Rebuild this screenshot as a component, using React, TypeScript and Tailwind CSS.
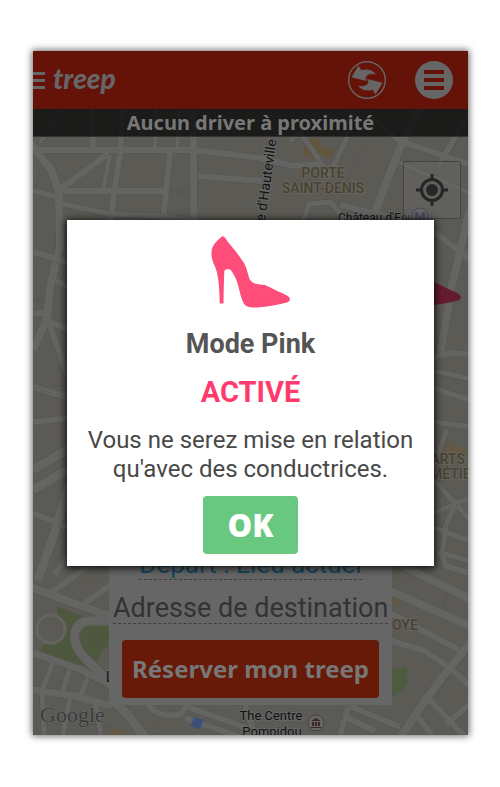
import React from "react";

const ROADS: { w: number; d: string }[] = [
  { w: 6, d: "M33 150H193L260 158L293 166L322 164" },
  { w: 8, d: "M30 143L52 171L59 192L60 247L50 287L47 318L33 350" },
  { w: 3, d: "M40 143L62 109" },
  { w: 6, d: "M92 109L93 150M123 109L120 153L110 222" },
  { w: 4, d: "M156 109L155 148M179 109L177 148M110 155L103 190" },
  { w: 7, d: "M193 109L194 225" },
  { w: 6, d: "M170 152L163 222M198 176L262 181M62 191H163M62 188L108 154" },
  { w: 5, d: "M33 191L58 197M63 204L110 214L163 216L200 222" },
  { w: 5, d: "M352 109L346 140L330 173M303 222L309 204L331 202L347 222M290 141L300 132L322 164L330 176" },
  { w: 8, d: "M420 105L399 150L377 207L370 225" },
  { w: 6, d: "M366 112L400 141L468 164M470 112L438 166M340 205L386 216" },
  { w: 4, d: "M398 162L470 193" },
  { w: 8, d: "M470 208L461 247L452 285L440 355" },
  { w: 6, d: "M430 229L470 259M430 358L450 353L470 354" },
  { w: 5, d: "M430 370L470 379M430 387L470 400M430 421L470 427M447 430L434 465" },
  { w: 5, d: "M430 515L470 498M430 526L470 541M457 500L446 525L442 553L470 561M434 480L470 520" },
  { w: 6, d: "M33 252L70 263M33 314L48 312M50 322L70 330M56 281L70 287M48 320L70 382" },
  { w: 6, d: "M33 387L70 398M33 422L70 418M33 513L70 528" },
  { w: 9, d: "M33 470L70 448M33 490L70 468M69 486L54 534L38 580" },
  { w: 8, d: "M28 586L57 597L109 616" },
  { w: 6, d: "M48 595L91 564M85 603L112 584M55 575L67 557" },
  { w: 9, d: "M112 621H88C77 622 72 633 76 644C80 657 97 669 112 683" },
  { w: 7, d: "M33 653L84 671L112 686M33 690L75 696L112 706" },
  { w: 5, d: "M53 662L42 691L44 735M70 668L61 697M88 677L79 700M70 698L63 735M95 703L101 735" },
  { w: 9, d: "M109 700C124 707 129 717 145 737" },
  { w: 6, d: "M145 700C152 714 166 718 181 714L188 704M185 706L247 728M185 718L240 737M245 705L255 735" },
  { w: 8, d: "M397 563L470 599M388 590L470 626" },
  { w: 6, d: "M388 612L459 650M388 640L425 651L450 668L472 688M440 550L446 566L470 573" },
  { w: 8, d: "M472 641L448 670L424 702L400 738" },
  { w: 6, d: "M427 697L466 738M350 706L400 727M346 717L375 731M340 735L348 706M414 712L432 735M446 724L470 704" },
];

const HEEL =
  "M11.800 0C14 1 15 3 17 6L26 17L33 27C37 34 37 42 40 45C43 49 50 48 54 49C62 53 69 56 75 59C80 61 80 65 76 66.500C66 69 56 71 46 71.500C39 72 35 71 32.500 67C29 60 28 50 25 43C22 37 20 34 19 33.500C17 33 14 33 13.300 35C13 46 12.600 56 12.500 67.500H8.700C8.500 55 8 48 7 42C6 34 4 31 2 26C-2 14 2 7 11.800 0Z";

const SWAP_ARROW =
  "M4 17.500L11.500 5L14.500 10C20 8 26.500 9.500 29.500 15C25.500 13.500 21.500 14 19.500 16.500C18.500 18 19 19.500 20.500 21.500L4 17.500Z";

function CityMap() {
  return (
    <svg
      className="absolute inset-0 h-full w-full"
      viewBox="33 51 435 684"
      preserveAspectRatio="xMidYMid slice"
      aria-hidden="true"
    >
      <rect x="33" y="51" width="435" height="684" fill="#5c5a54" />
      <path d="M308 139L318 137L320 146L334 150L330 158L318 154L314 160L301 154Z" fill="#62563f" />
      <path d="M446 442L466 449L464 457L444 452Z" fill="#625843" />
      <path d="M392 595L402 600L397 607L392 605Z" fill="#625843" />
      <path d="M113 728L126 731L122 737H108Z" fill="#625843" />
      <path d="M57 606L86 618L76 630L76 650L88 667L40 652L46 640L57 640Z" fill="#4d583e" />
      <path d="M110 624L86 624L79 637L84 652L97 662L102 650L110 645Z" fill="#4d583e" />
      <path d="M392 667L402 670L404 666L408 669L406 679L408 683L402 690L392 697Z" fill="#4d5b3f" />
      <g fill="none" stroke="#54534e" strokeWidth="1">
        <path d="M169 192H190M40 168L35 190M36 301L43 303M33 300H45M50 386H64M80 163V168M450 272L470 280M450 592L442 608M85 722L110 728M250 722L262 735M448 677L434 700" />
      </g>
      <g fill="none" stroke="#555450" strokeLinejoin="round">
        {ROADS.map((r) => (
          <path key={r.d} d={r.d} strokeWidth={r.w + 1} />
        ))}
      </g>
      <g fill="none" stroke="#646463" strokeLinejoin="round">
        {ROADS.map((r) => (
          <path key={r.d} d={r.d} strokeWidth={r.w} />
        ))}
      </g>
      <circle cx="51" cy="629" r="14" fill="#5c5a54" stroke="#646463" strokeWidth="3" />
      <g fill="none" stroke="#4d4c49" strokeDasharray="1 3">
        <path d="M365 137L336 210M460 137L440 172M33 256L70 266M33 388L70 399M45 657L109 690M434 376L468 382M434 514L468 500M434 524L468 534M394 578L398 556M337 735L347 706M157 640V735" />
      </g>
      <rect x="192" y="718" width="10" height="10" rx="1" fill="#3b5078" transform="rotate(18 197 723)" />

      <g fontFamily="Roboto, sans-serif" fontSize="14">
        <g fill="#484133" stroke="#66635c" strokeWidth="2" paintOrder="stroke" fontWeight="500" textAnchor="middle">
          <text x="323" y="178">PORTE</text>
          <text x="323" y="193">SAINT-DENIS</text>
          <text x="392" y="630" textAnchor="start">OYE</text>
          <text x="465" y="464" textAnchor="end">ARTS</text>
          <text x="430" y="479" textAnchor="start">MÉTIERS</text>
        </g>
        <g fill="#111" stroke="#666" strokeWidth="2" paintOrder="stroke">
          <text x="338" y="222" fontSize="12">Château d'Eau</text>
          <text transform="translate(265 222) rotate(-82)">e d'Hauteville</text>
          <text x="271" y="720" fontSize="13" textAnchor="middle">The Centre</text>
          <text x="272" y="736" fontSize="13" textAnchor="middle">Pompidou</text>
          <text x="106" y="682">L</text>
        </g>
      </g>
      <circle cx="420" cy="216" r="8" fill="#66666c" stroke="#2b2850" />
      <text x="420" y="221" fontFamily="Roboto, sans-serif" fontSize="13" fontWeight="700" fill="#2b2850" textAnchor="middle">M</text>
      <circle cx="316" cy="723" r="8" fill="#666" stroke="#454340" />
      <path d="M311 721L316 718L321 721ZM312 722H314V726H312ZM315 722H317V726H315ZM318 722H320V726H318ZM311 727H321V728H311Z" fill="#3a2520" />
      <text x="40" y="722" fontFamily="Liberation Serif, serif" fontSize="22" fill="#3c3c3c" stroke="#696969" strokeWidth="1" paintOrder="stroke">Google</text>
      <g transform="translate(382 234)" fill="#661c2f">
        <path d={HEEL} />
      </g>
    </svg>
  );
}

function Header() {
  return (
    <header className="relative flex h-[58px] items-center bg-[#651208] pr-[15px]">
      <button type="button" aria-label="Navigation" className="flex w-3 flex-col gap-1">
        <span className="h-[3px] w-full bg-[#666]" />
        <span className="h-[3px] w-full bg-[#666]" />
        <span className="h-[3px] w-full bg-[#666]" />
      </button>
      <span className="ml-2 pb-1 font-['Lato'] text-[28px] leading-8 font-black text-[#666] italic">treep</span>
      <div className="ml-auto flex items-center gap-7">
        <button type="button" aria-label="Échanger">
          <svg className="block size-10" viewBox="0 0 40 40">
            <circle cx="20" cy="20" r="18.300" fill="none" stroke="#666" strokeWidth="1.400" />
            <g fill="#666" stroke="#651208" strokeWidth="0.600">
              <path d={SWAP_ARROW} />
              <path d={SWAP_ARROW} transform="rotate(180 20 20)" />
            </g>
          </svg>
        </button>
        <button type="button" aria-label="Menu" className="flex size-[38px] flex-col items-center justify-center gap-1 rounded-full bg-[#666]">
          <span className="h-1 w-5 bg-[#651208]" />
          <span className="h-1 w-5 bg-[#651208]" />
          <span className="h-1 w-5 bg-[#651208]" />
        </button>
      </div>
    </header>
  );
}

function BookingForm() {
  return (
    <form
      onSubmit={(e) => e.preventDefault()}
      className="relative mx-[76px] flex flex-col bg-[#666] px-1 pt-2 pb-[7px] font-['Roboto']"
    >
      <input
        aria-label="Départ"
        defaultValue="Départ : Lieu actuel"
        className="mx-[26px] h-8 border-b border-dashed border-[#3f3f3f] bg-transparent text-center text-[26px] leading-8 text-[#17475c] outline-none"
      />
      <input
        aria-label="Adresse de destination"
        placeholder="Adresse de destination"
        className="mt-3 h-8 border-b border-dashed border-[#3f3f3f] bg-transparent text-center text-[27px] leading-8 outline-none placeholder:text-[#333]"
      />
      <button
        type="submit"
        className="mx-[9px] mt-4 h-[58px] rounded bg-[#681a08] font-['Noto_Sans'] text-[24px] font-bold whitespace-nowrap text-[#777]"
      >
        Réserver mon treep
      </button>
    </form>
  );
}

function PinkModeDialog() {
  return (
    <div className="absolute inset-0 flex items-center px-[34px]">
      <section
        role="dialog"
        aria-labelledby="pink-title"
        className="flex w-full flex-col items-center bg-white pt-4 pb-3 text-center font-['Roboto'] shadow-[0_1px_8px_1px_rgba(0,0,0,0.9)]"
      >
        <svg className="h-[72px] w-20" viewBox="0 0 80 72" aria-hidden="true">
          <path d={HEEL} fill="#ff4d7a" />
        </svg>
        <h2 id="pink-title" className="mt-5 text-[27px] leading-8 font-bold text-[#555]">
          Mode Pink
        </h2>
        <p className="mt-[14px] text-[29px] leading-9 font-bold text-[#ff3b6e]">ACTIVÉ</p>
        <p className="mt-4 px-4 text-[24px] leading-[29px] text-[#484848]">
          Vous ne serez mise en relation qu'avec des conductrices.
        </p>
        <button
          type="button"
          className="mt-3 h-[58px] w-[95px] rounded-sm bg-[#69c87f] font-['Noto_Sans'] text-[31px] font-black text-white"
        >
          OK
        </button>
      </section>
    </div>
  );
}

export default function App() {
  return (
    <main className="bg-white px-8 py-[51px]">
      <div className="relative mr-0 ml-px flex aspect-[435/684] flex-col overflow-hidden shadow-[0_0_7px_1px_rgba(0,0,0,0.6)]">
        <CityMap />
        <Header />
        <p className="relative h-7 border-b border-[#333] bg-black/70 text-center font-['Noto_Sans'] text-[20px] leading-7 font-bold text-[#777]">
          Aucun driver à proximité
        </p>
        <div className="relative flex flex-1 flex-col justify-end pb-[30px]">
          <button
            type="button"
            aria-label="Me localiser"
            className="absolute top-6 right-[7px] flex size-[58px] items-center justify-center rounded-xs border border-[#444] bg-[#666]/50"
          >
            <svg className="size-8" viewBox="0 0 32 32" fill="none" stroke="#262626">
              <circle cx="16" cy="16" r="10.500" strokeWidth="3" />
              <circle cx="16" cy="16" r="6" fill="#262626" stroke="none" />
              <path d="M16 0V6M16 26V32M0 16H6M26 16H32" strokeWidth="3" />
            </svg>
          </button>
          <BookingForm />
        </div>
        <PinkModeDialog />
      </div>
    </main>
  );
}
